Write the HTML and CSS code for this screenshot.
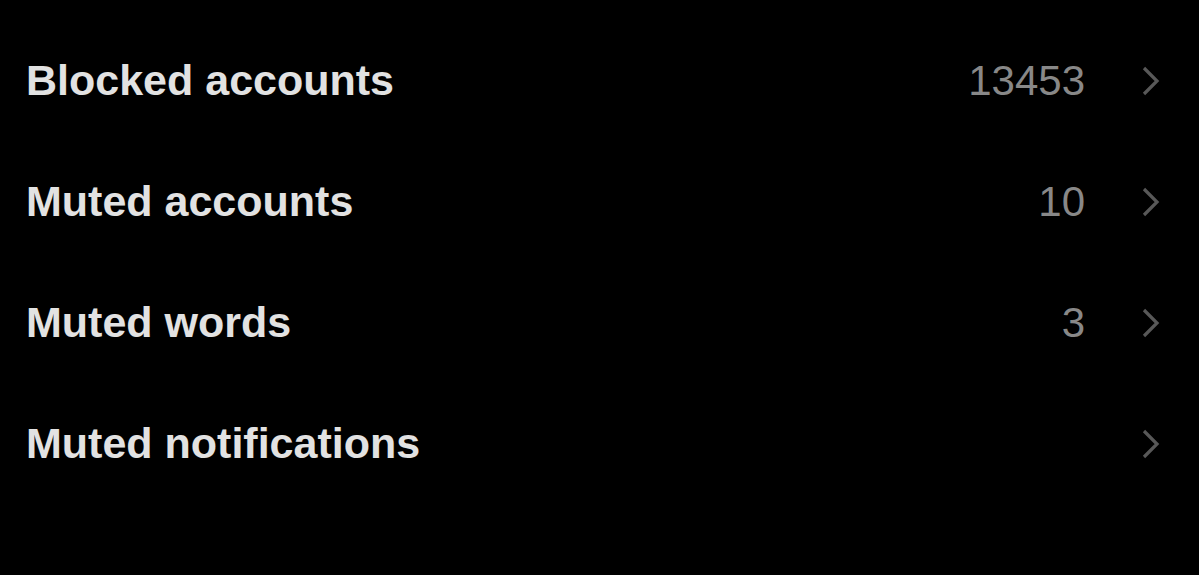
FILE: index.html
```html
<!DOCTYPE html>
<html lang="en">
<head>
  <meta charset="UTF-8">
  <meta name="viewport" content="width=device-width, initial-scale=1.0">
  <title>Privacy and safety</title>
  <link rel="stylesheet" href="styles.css">
</head>
<body>
  <ul class="settings">
    <li class="row">
      <span class="label">Blocked accounts</span>
      <span class="count">13453</span>
      <svg class="chevron" viewBox="0 0 18 30"><path d="M2 2 L15 15 L2 28"/></svg>
    </li>
    <li class="row">
      <span class="label">Muted accounts</span>
      <span class="count">10</span>
      <svg class="chevron" viewBox="0 0 18 30"><path d="M2 2 L15 15 L2 28"/></svg>
    </li>
    <li class="row">
      <span class="label">Muted words</span>
      <span class="count">3</span>
      <svg class="chevron" viewBox="0 0 18 30"><path d="M2 2 L15 15 L2 28"/></svg>
    </li>
    <li class="row">
      <span class="label">Muted notifications</span>
      <span class="count"></span>
      <svg class="chevron" viewBox="0 0 18 30"><path d="M2 2 L15 15 L2 28"/></svg>
    </li>
  </ul>
</body>
</html>
```

FILE: styles.css
```css
body {
  margin: 0;
  background-color: #000;
  font-family: "Liberation Sans", Arial, sans-serif;
}

.settings {
  list-style: none;
  margin: 0;
  padding: 20px 39px 0 26px;
}

.row {
  display: flex;
  align-items: center;
  height: 121px;
}

.label {
  flex: 1;
  font-size: 43px;
  font-weight: bold;
  color: #e2e2e2;
}

.count {
  font-size: 42px;
  color: #888;
}

.chevron {
  width: 18px;
  height: 30px;
  margin-left: 57px;
  fill: none;
  stroke: #585858;
  stroke-width: 3.2;
}
```
